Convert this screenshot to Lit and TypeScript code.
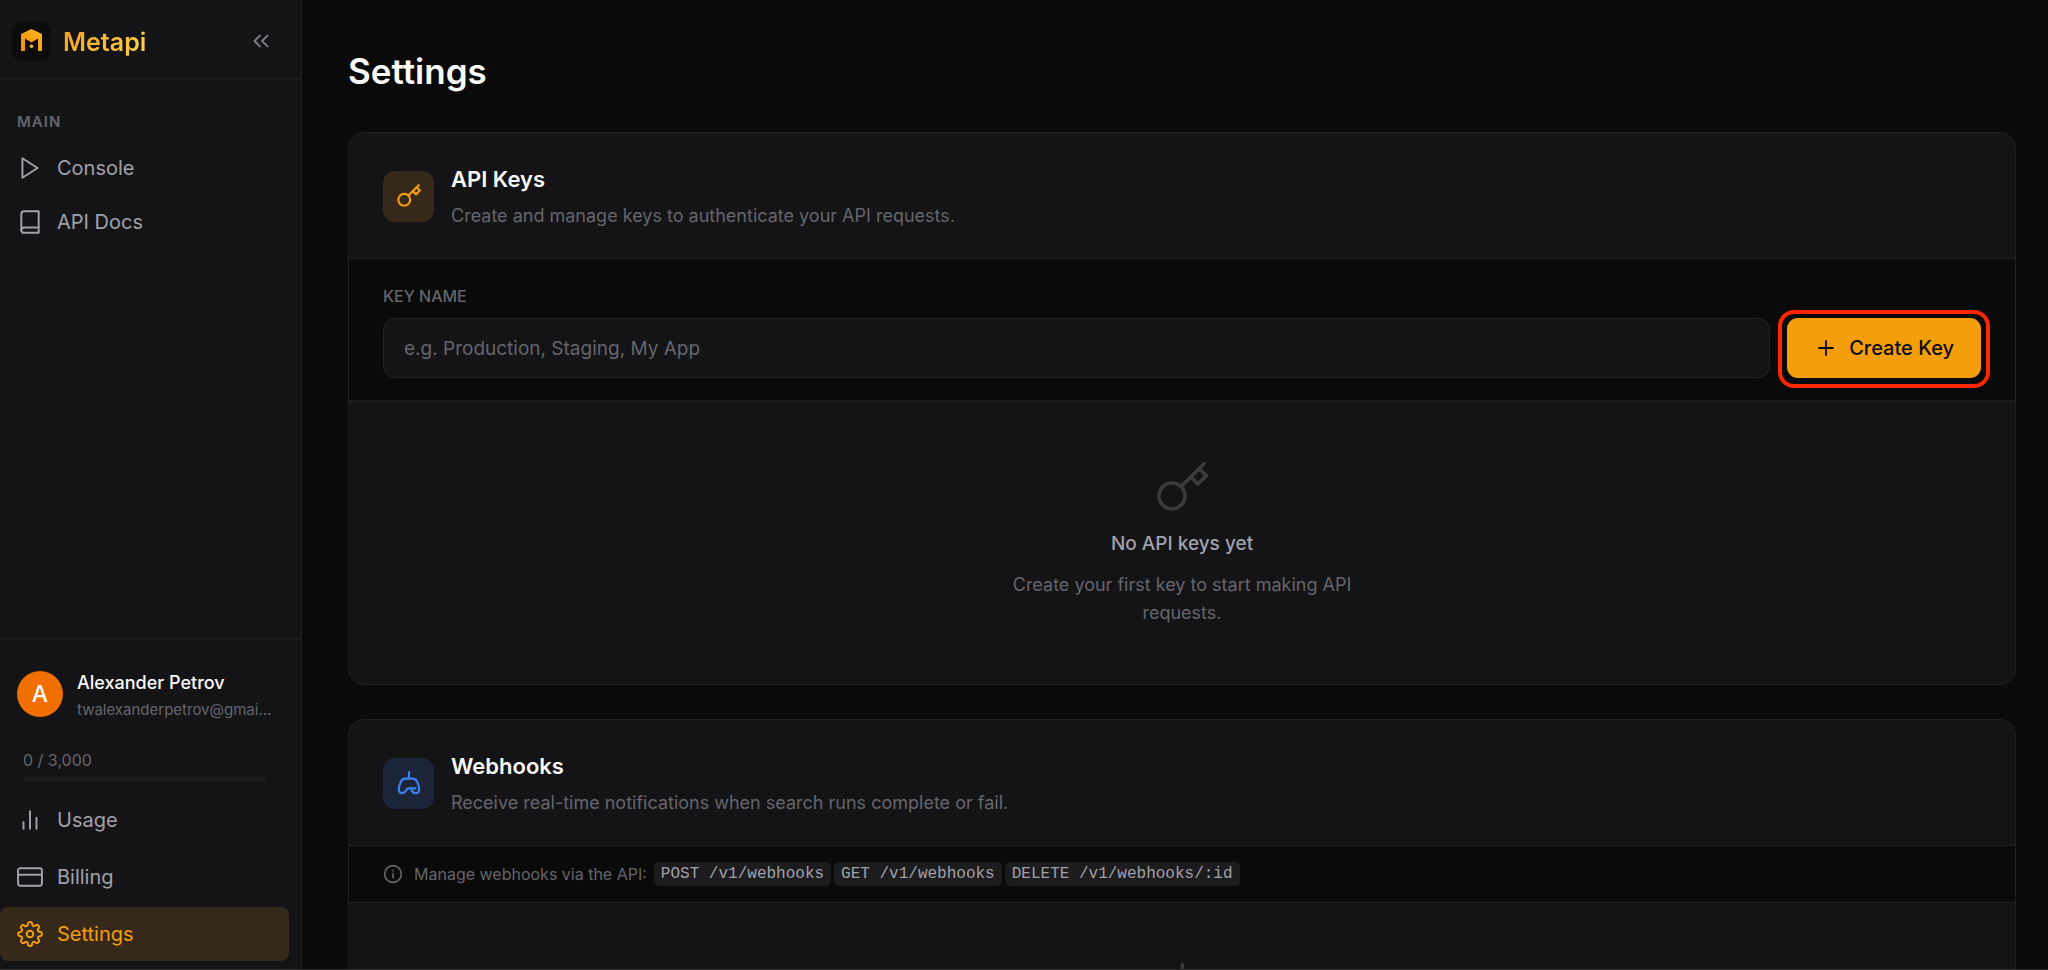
import { LitElement, html, css, svg } from "lit";
import { customElement, property } from "lit/decorators.js";

const paths = {
  play: svg`<polygon points="5 3 19 12 5 21 5 3"></polygon>`,
  book: svg`<path d="M4 19.5A2.5 2.5 0 0 1 6.5 17H20"></path><path d="M6.5 2H20v20H6.5A2.5 2.5 0 0 1 4 19.5v-15A2.5 2.5 0 0 1 6.5 2z"></path>`,
  chart: svg`<path d="M18 20V10M12 20V4M6 20v-6"></path>`,
  card: svg`<rect x="1" y="4" width="22" height="16" rx="2"></rect><path d="M1 10h22"></path>`,
  gear: svg`<circle cx="12" cy="12" r="3"></circle><path d="M19.4 15a1.65 1.65 0 0 0 .33 1.82l.06.06a2 2 0 0 1 0 2.83 2 2 0 0 1-2.83 0l-.06-.06a1.65 1.65 0 0 0-1.82-.33 1.65 1.65 0 0 0-1 1.51V21a2 2 0 0 1-2 2 2 2 0 0 1-2-2v-.09A1.65 1.65 0 0 0 9 19.4a1.65 1.65 0 0 0-1.82.33l-.06.06a2 2 0 0 1-2.83 0 2 2 0 0 1 0-2.83l.06-.06a1.65 1.65 0 0 0 .33-1.82 1.65 1.65 0 0 0-1.51-1H3a2 2 0 0 1-2-2 2 2 0 0 1 2-2h.09A1.65 1.65 0 0 0 4.6 9a1.65 1.65 0 0 0-.33-1.82l-.06-.06a2 2 0 0 1 0-2.83 2 2 0 0 1 2.83 0l.06.06a1.65 1.65 0 0 0 1.82.33H9a1.65 1.65 0 0 0 1-1.51V3a2 2 0 0 1 2-2 2 2 0 0 1 2 2v.09a1.65 1.65 0 0 0 1 1.51 1.65 1.65 0 0 0 1.82-.33l.06-.06a2 2 0 0 1 2.83 0 2 2 0 0 1 0 2.83l-.06.06a1.65 1.65 0 0 0-.33 1.82V9a1.65 1.65 0 0 0 1.51 1H21a2 2 0 0 1 2 2 2 2 0 0 1-2 2h-.09a1.65 1.65 0 0 0-1.51 1z"></path>`,
  chevrons: svg`<path d="M11 17l-5-5 5-5M18 17l-5-5 5-5"></path>`,
  key: svg`<path d="M21 2l-2 2m-7.61 7.61a5.5 5.5 0 1 1-7.778 7.778 5.5 5.5 0 0 1 7.777-7.777zm0 0L15.5 7.5m0 0l3 3L22 7l-3-3m-3.5 3.5L19 4"></path>`,
  hook: svg`<path d="M12 2V8M18 17h-6c-1.400 0-2 .5-2.600 1.600-.8 1.400-1.400 2.700-3.400 2.700s-3.400-1.300-3.400-3.600c0-2.400.8-4.500 1.800-6.700C5.300 9 6.500 8 8.500 8h7c2 0 3.200 1 4.100 3 1 2.200 1.800 4.300 1.800 6.700 0 2.300-1.400 3.600-3.400 3.600s-2.900-1.200-3.600-2.500"></path>`,
  info: svg`<circle cx="12" cy="12" r="10"></circle><path d="M12 16.500v-5M12 7.500v.5"></path>`,
  plus: svg`<path d="M12 5v14M5 12h14"></path>`,
};
type IconName = keyof typeof paths;

@customElement("line-icon")
class LineIcon extends LitElement {
  @property() name: IconName = "plus";

  static styles = css`
    :host { display: block; flex: none; width: 26px; height: 26px; }
    svg {
      display: block; width: 100%; height: 100%; fill: none; stroke: currentColor;
      stroke-width: var(--icon-stroke, 1.8); stroke-linecap: round; stroke-linejoin: round;
    }
  `;

  render() {
    return html`<svg viewBox="0 0 24 24" aria-hidden="true">${paths[this.name]}</svg>`;
  }
}

@customElement("app-root")
class AppRoot extends LitElement {
  static styles = css`
    * { box-sizing: border-box; }
    :host {
      --bg: #0a0a0a;
      --surface: #141416;
      --raised: #1c1c1e;
      --line: #202022;
      --muted: #65656d;
      --soft: #a1a1aa;
      --bright: #fafafa;
      --amber: #f59e0b;
      box-sizing: border-box; display: flex; height: 100vh; overflow: hidden;
      border-bottom: 1px solid #2c2c2e;
      background: var(--bg); color: var(--bright);
      font-family: Inter, "Noto Sans", sans-serif; font-size: 18px;
    }
    h1, h2, h3, p { margin: 0; font-weight: 400; }
    button, input { font: inherit; }

    .sidebar {
      flex: none; width: 302px; display: flex; flex-direction: column;
      background: var(--surface); border-right: 1px solid var(--line);
    }
    .brand {
      display: flex; align-items: center; height: 80px; padding: 4px 27px 0 12px;
      border-bottom: 2px solid var(--raised);
    }
    .logo { flex: none; display: block; width: 39px; height: 39px; border-radius: 9px; background: #0c0c0d; }
    .brand-name {
      margin-left: 12px; padding-top: 2px; font-size: 25px; line-height: 32px; font-weight: 600;
      background: linear-gradient(135deg, #f5a01a, #fcd34d);
      background-clip: text; -webkit-background-clip: text; color: transparent;
    }
    .collapse { margin-left: auto; padding: 0; border: 0; background: none; color: #7b7b84; cursor: pointer; }
    .nav { display: flex; flex-direction: column; }
    .nav-main { padding-top: 32px; }
    .nav-label { padding: 0 17px; margin-bottom: 9px; font-size: 15px; line-height: 20px; font-weight: 600; letter-spacing: 1px; color: var(--muted); }
    .nav-item {
      display: flex; align-items: center; gap: 14px; height: 54px; margin-right: 12px; padding-left: 17px;
      border-radius: 8px; font-size: 20px; color: var(--soft); text-decoration: none;
    }
    .nav-item.active { background: #36281a; color: var(--amber); }
    .account { margin-top: auto; padding: 31px 0 8px; border-top: 2px solid var(--raised); }
    .account .nav { gap: 3px; margin-top: 11px; }
    .user { display: flex; align-items: center; gap: 14px; height: 46px; padding: 0 28px 0 17px; }
    .avatar {
      flex: none; display: grid; place-items: center; width: 46px; height: 46px;
      border-radius: 50%; background: #f06f00; font-size: 23px; font-weight: 500;
    }
    .who { min-width: 0; padding-top: 4px; }
    .user-name { font-size: 18px; line-height: 28px; font-weight: 500; }
    .user-mail { font-size: 15px; line-height: 26px; color: var(--muted); overflow: hidden; text-overflow: ellipsis; white-space: nowrap; }
    .quota { margin: 33px 35px 0 23px; font-size: 16px; line-height: 20px; color: var(--muted); }
    .track { height: 6px; margin-top: 6px; border-radius: 3px; background: var(--raised); }

    .content { flex: 1; min-width: 0; padding: 51px 32px 0 46px; overflow: hidden; }
    .page-title { margin-bottom: 41px; font-size: 35px; line-height: 40px; font-weight: 600; }
    .panel { margin-bottom: 34px; border: 1px solid var(--line); border-radius: 16px; background: var(--surface); overflow: hidden; }
    .panel-head { display: flex; align-items: center; gap: 17px; padding: 30px 34px 29px; border-bottom: 1px solid var(--line); }
    .tile { flex: none; display: grid; place-items: center; width: 51px; height: 51px; border-radius: 12px; --icon-stroke: 2; }
    .tile-amber { background: #36281a; color: var(--amber); }
    .tile-blue { background: #1c243a; color: #3b82f6; }
    .panel-title { font-size: 22px; line-height: 32px; font-weight: 600; }
    .panel-text { margin-top: 8px; font-size: 18px; line-height: 26px; color: var(--muted); }

    .key-form { display: flex; align-items: flex-end; gap: 17px; padding: 27px 34px 22px; background: var(--bg); border-bottom: 2px solid var(--raised); }
    .field { flex: 1; min-width: 0; }
    .field-label { display: block; margin-bottom: 12px; font-size: 16px; line-height: 20px; font-weight: 500; color: var(--muted); }
    .field-input {
      display: block; width: 100%; height: 60px; padding: 0 20px; border: 1px solid #222224; border-radius: 12px;
      background: var(--surface); color: var(--bright); font-size: 19px; outline: none;
    }
    .field-input::placeholder { color: var(--muted); opacity: 1; }
    .create {
      position: relative; flex: none; display: flex; align-items: center; gap: 11px; height: 60px; padding: 0 27px;
      border: 0; border-radius: 11px; background: var(--amber); color: #0a0a0a; font-size: 20px; font-weight: 500; cursor: pointer;
    }
    .create::after { content: ""; position: absolute; inset: -8px -9px -10px; border: 4px solid #ff2600; border-radius: 16px; }
    .create line-icon { width: 24px; height: 24px; }

    .empty { display: flex; flex-direction: column; align-items: center; padding: 57px 34px; text-align: center; }
    .empty line-icon { width: 57px; height: 57px; color: #3b3b3d; --icon-stroke: 1.5; }
    .empty-title { margin-top: 14px; font-size: 19px; line-height: 28px; font-weight: 500; color: var(--soft); }
    .empty-text { max-width: 366px; margin-top: 13px; font-size: 18px; line-height: 28px; color: var(--muted); }

    .hint { display: flex; align-items: center; gap: 11px; height: 57px; padding: 0 34px; background: var(--bg); border-bottom: 1px solid var(--line); font-size: 16px; color: var(--muted); }
    .hint line-icon { width: 20px; height: 20px; --icon-stroke: 2; }
    .hint-line { display: flex; align-items: center; gap: 7px; }
    .endpoints { display: flex; gap: 3px; }
    .endpoint { padding: 1px 7px 0; border-radius: 5px; background: var(--raised); color: var(--soft); font: 16px/23px "Liberation Mono", monospace; white-space: pre; }
  `;

  private navItem(icon: IconName, label: string, active = false) {
    return html`<a class="nav-item ${active ? "active" : ""}" href="#${label}"><line-icon name=${icon}></line-icon>${label}</a>`;
  }

  private head(icon: IconName, tone: string, title: string, text: string) {
    return html`
      <header class="panel-head">
        <div class="tile ${tone}"><line-icon name=${icon}></line-icon></div>
        <div>
          <h2 class="panel-title">${title}</h2>
          <p class="panel-text">${text}</p>
        </div>
      </header>`;
  }

  render() {
    return html`
      <aside class="sidebar">
        <div class="brand">
          <svg class="logo" viewBox="0 0 39 39" aria-hidden="true">
            <defs>
              <linearGradient id="flame" x1="0" y1="1" x2="1" y2="0">
                <stop offset="0" stop-color="#f38b0a"></stop>
                <stop offset="1" stop-color="#fcb823"></stop>
              </linearGradient>
            </defs>
            <path fill="url(#flame)" d="M19.500 7L30 12V29H26V16.500L19.500 20.500L13 16.500V29H9V12Z"></path>
            <circle cx="19.500" cy="24.300" r="1.800" fill="#fcb823"></circle>
          </svg>
          <span class="brand-name">Metapi</span>
          <button class="collapse" aria-label="Collapse sidebar"><line-icon name="chevrons"></line-icon></button>
        </div>
        <nav class="nav nav-main">
          <div class="nav-label">MAIN</div>
          ${this.navItem("play", "Console")}
          ${this.navItem("book", "API Docs")}
        </nav>
        <div class="account">
          <div class="user">
            <div class="avatar">A</div>
            <div class="who">
              <div class="user-name">Alexander Petrov</div>
              <div class="user-mail">twalexanderpetrov@gmai…</div>
            </div>
          </div>
          <div class="quota">
            0 / 3,000
            <div class="track" role="progressbar" aria-label="Quota used" aria-valuenow="0" aria-valuemax="3000"></div>
          </div>
          <nav class="nav">
            ${this.navItem("chart", "Usage")}
            ${this.navItem("card", "Billing")}
            ${this.navItem("gear", "Settings", true)}
          </nav>
        </div>
      </aside>
      <main class="content">
        <h1 class="page-title">Settings</h1>
        <section class="panel">
          ${this.head("key", "tile-amber", "API Keys", "Create and manage keys to authenticate your API requests.")}
          <form class="key-form" @submit=${(e: Event) => e.preventDefault()}>
            <div class="field">
              <label class="field-label" for="key-name">KEY NAME</label>
              <input class="field-input" id="key-name" type="text" placeholder="e.g. Production, Staging, My App" />
            </div>
            <button class="create" type="submit"><line-icon name="plus"></line-icon>Create Key</button>
          </form>
          <div class="empty">
            <line-icon name="key"></line-icon>
            <h3 class="empty-title">No API keys yet</h3>
            <p class="empty-text">Create your first key to start making API requests.</p>
          </div>
        </section>
        <section class="panel">
          ${this.head("hook", "tile-blue", "Webhooks", "Receive real-time notifications when search runs complete or fail.")}
          <div class="hint">
            <line-icon name="info"></line-icon>
            <div class="hint-line">
              <span>Manage webhooks via the API:</span>
              <div class="endpoints">
                ${["POST /v1/webhooks", "GET /v1/webhooks", "DELETE /v1/webhooks/:id"].map(
                  (endpoint) => html`<code class="endpoint">${endpoint}</code>`
                )}
              </div>
            </div>
          </div>
          <div class="empty"><line-icon name="hook"></line-icon></div>
        </section>
      </main>
    `;
  }
}
